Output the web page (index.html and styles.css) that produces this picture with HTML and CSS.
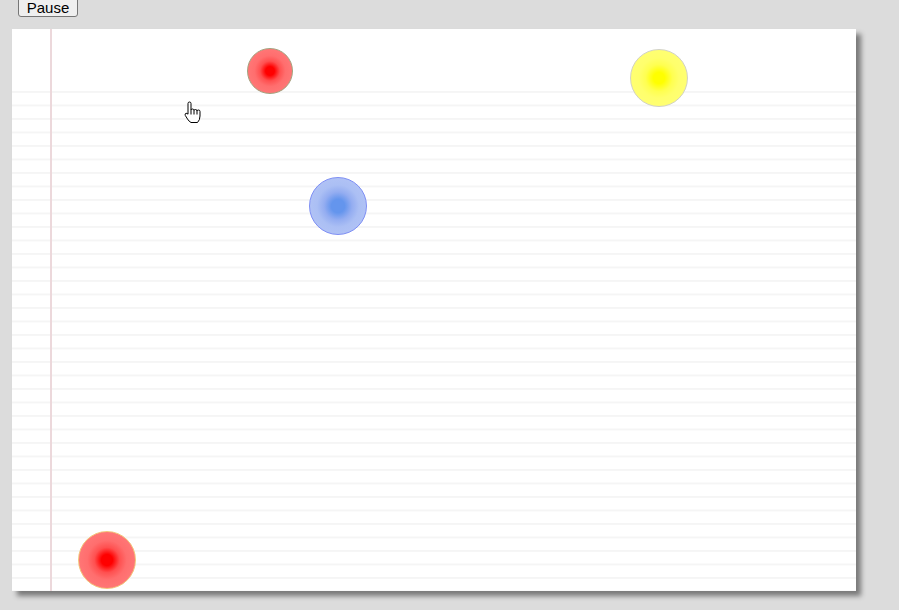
FILE: index.html
```html
<!DOCTYPE html>
<html>
<head>
<meta charset="utf-8">
<title>Balls</title>
<link rel="stylesheet" href="styles.css">
</head>
<body>
<button class="pause-btn">Pause</button>
<div class="paper">
  <div class="ball ball-red-small"></div>
  <div class="ball ball-yellow"></div>
  <div class="ball ball-blue"></div>
  <div class="ball ball-red-big"></div>
  <svg class="cursor" width="18" height="23" viewBox="0 0 18 23">
    <path d="M4 2.5 Q4 1 5.5 1 Q7 1 7 2.5 V9 Q7 8 8.5 8 Q10 8 10 9.5 Q10 8.5 11.5 8.5 Q13 8.5 13 10 Q13 9 14.5 9 Q16 9 16 10.5 V15 Q16 19 13.5 21.5 H7 Q5 20.5 3.5 18 L1.3 14.5 Q0.5 12.8 2 12.3 Q3 12 4 13.2 Z" fill="#fff" stroke="#000" stroke-width="1" stroke-linejoin="round"/>
    <path d="M10 9.5 V13.5 M13 10 V13.5 M7 9 V13.5" fill="none" stroke="#000" stroke-width="1"/>
  </svg>
</div>
</body>
</html>
```

FILE: styles.css
```css
html, body {
  margin: 0;
  padding: 0;
}
body {
  background: #dcdcdc;
  padding-left: 12px;
  height: 610px;
  overflow: hidden;
}
.pause-btn {
  display: block;
  box-sizing: border-box;
  margin: -4px 0 0 6px;
  font-family: "Liberation Sans", Arial, sans-serif;
  font-size: 15px;
  line-height: 16px;
  padding: 2px 6px 0;
  height: 21px;
  width: 60px;
  color: #000;
  background: #efefef;
  border: 1px solid #767676;
  border-radius: 3px;
}
.paper {
  position: relative;
  margin-top: 12px;
  width: 844px;
  height: 562px;
  box-sizing: border-box;
  padding-top: 62px;
  background-color: #fff;
  background-image:
    linear-gradient(to right, transparent 38px, #ecd8db 38px, #ecd8db 40px, transparent 40px),
    linear-gradient(to bottom, #f5f5f5 0, #f5f5f5 2px, transparent 2px),
    linear-gradient(#fff, #fff);
  background-size: 100% 100%, 100% 13.5px, 100% 100%;
  background-repeat: no-repeat, repeat, no-repeat;
  background-origin: border-box, content-box, border-box;
  background-clip: border-box, content-box, border-box;
  box-shadow: 5px 5px 5px rgba(0, 0, 0, 0.45);
}
.ball {
  position: absolute;
  box-sizing: border-box;
  border-radius: 50%;
  border: 1.5px solid #ccc;
}
.ball-red-small {
  left: 235px;
  top: 19px;
  width: 46px;
  height: 46px;
  border-color: #a3a07c;
  background: radial-gradient(circle closest-side, #ff0000 0%, #ff0000 20%, #ff5050 45%, #ff6e6e 70%, #ff7676 100%);
}
.ball-yellow {
  left: 618px;
  top: 20px;
  width: 58px;
  height: 58px;
  border-color: #d2d2c4;
  background: radial-gradient(circle closest-side, #ffff00 0%, #ffff00 20%, #ffff50 48%, #ffff6c 72%, #ffff72 100%);
}
.ball-blue {
  left: 297px;
  top: 148px;
  width: 58px;
  height: 58px;
  border-color: #7d8ef4;
  background: radial-gradient(circle closest-side, #6495ed 0%, #6495ed 24%, #94adf1 50%, #abbff4 75%, #b0c2f5 100%);
}
.ball-red-big {
  left: 66px;
  top: 502px;
  width: 58px;
  height: 58px;
  border-color: #f2c67a;
  background: radial-gradient(circle closest-side, #ff0000 0%, #ff0000 20%, #ff5050 45%, #ff6e6e 70%, #ff7676 100%);
}
.cursor {
  position: absolute;
  left: 172px;
  top: 72px;
}
```
